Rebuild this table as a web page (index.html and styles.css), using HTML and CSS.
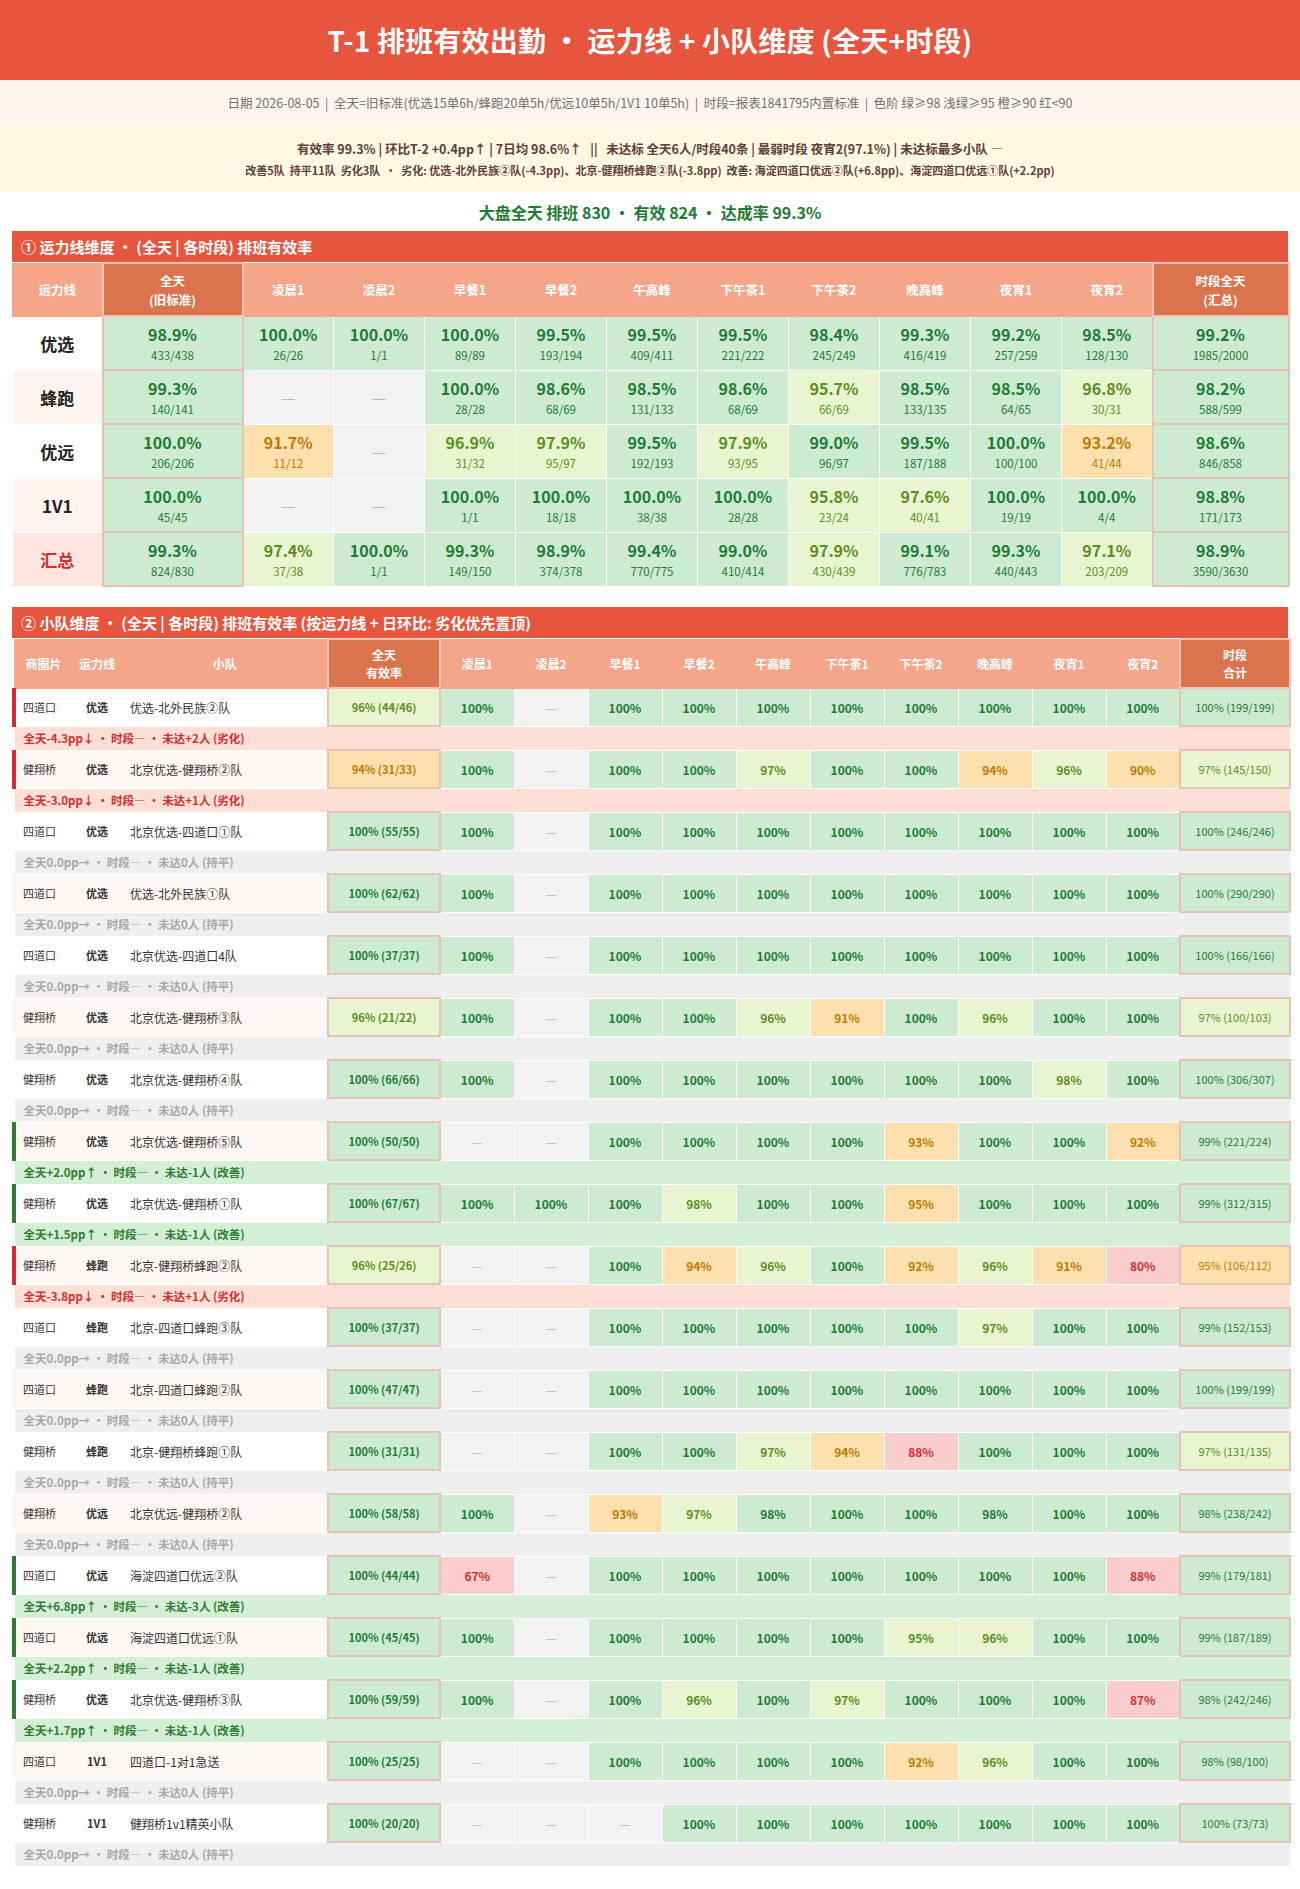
FILE: index.html
```html
<!DOCTYPE html>
<html lang="zh-CN">
<head>
<meta charset="utf-8">
<title>T-1 排班有效出勤</title>
<link rel="stylesheet" href="styles.css">
</head>
<body>
<header class="top"><h1>T-1 排班有效出勤 • 运力线 + 小队维度 (全天+时段)</h1></header>
<div class="meta">日期 2026-08-05  |  全天=旧标准(优选15单6h/蜂跑20单5h/优远10单5h/1V1 10单5h)  |  时段=报表1841795内置标准  |  色阶 绿≥98 浅绿≥95 橙≥90 红&lt;90</div>
<div class="brief">
  <p class="l1">有效率 99.3% | 环比T-2 +0.4pp↑ | 7日均 98.6%↑   ||   未达标 全天6人/时段40条 | 最弱时段 夜宵2(97.1%) | 未达标最多小队 —</p>
  <p class="l2">改善5队  持平11队  劣化3队  •  劣化: 优选-北外民族②队(-4.3pp)、北京-健翔桥蜂跑②队(-3.8pp)  改善: 海淀四道口优远②队(+6.8pp)、海淀四道口优远①队(+2.2pp)</p>
</div>
<div class="kpi">大盘全天 排班 830 • 有效 824 • 达成率 99.3%</div>

<section class="sec">
  <h2 class="sec-title">① 运力线维度 • (全天 | 各时段) 排班有效率</h2>
  <table class="t1">
    <colgroup><col class="c-lab"><col class="c-day"><col span="10" class="c-p"><col class="c-tot"></colgroup>
    <thead>
      <tr><th>运力线</th><th class="hk">全天<br>(旧标准)</th><th>凌晨1</th><th>凌晨2</th><th>早餐1</th><th>早餐2</th><th>午高峰</th><th>下午茶1</th><th>下午茶2</th><th>晚高峰</th><th>夜宵1</th><th>夜宵2</th><th class="hk">时段全天<br>(汇总)</th></tr>
    </thead>
    <tbody>
      <tr><td class="lab">优选</td><td class="k g"><b>98.9%</b><span>433/438</span></td><td class="g"><b>100.0%</b><span>26/26</span></td><td class="g"><b>100.0%</b><span>1/1</span></td><td class="g"><b>100.0%</b><span>89/89</span></td><td class="g"><b>99.5%</b><span>193/194</span></td><td class="g"><b>99.5%</b><span>409/411</span></td><td class="g"><b>99.5%</b><span>221/222</span></td><td class="g"><b>98.4%</b><span>245/249</span></td><td class="g"><b>99.3%</b><span>416/419</span></td><td class="g"><b>99.2%</b><span>257/259</span></td><td class="g"><b>98.5%</b><span>128/130</span></td><td class="k g"><b>99.2%</b><span>1985/2000</span></td></tr>
      <tr class="alt"><td class="lab">蜂跑</td><td class="k g"><b>99.3%</b><span>140/141</span></td><td class="na">—</td><td class="na">—</td><td class="g"><b>100.0%</b><span>28/28</span></td><td class="g"><b>98.6%</b><span>68/69</span></td><td class="g"><b>98.5%</b><span>131/133</span></td><td class="g"><b>98.6%</b><span>68/69</span></td><td class="lg"><b>95.7%</b><span>66/69</span></td><td class="g"><b>98.5%</b><span>133/135</span></td><td class="g"><b>98.5%</b><span>64/65</span></td><td class="lg"><b>96.8%</b><span>30/31</span></td><td class="k g"><b>98.2%</b><span>588/599</span></td></tr>
      <tr><td class="lab">优远</td><td class="k g"><b>100.0%</b><span>206/206</span></td><td class="o"><b>91.7%</b><span>11/12</span></td><td class="na">—</td><td class="lg"><b>96.9%</b><span>31/32</span></td><td class="lg"><b>97.9%</b><span>95/97</span></td><td class="g"><b>99.5%</b><span>192/193</span></td><td class="lg"><b>97.9%</b><span>93/95</span></td><td class="g"><b>99.0%</b><span>96/97</span></td><td class="g"><b>99.5%</b><span>187/188</span></td><td class="g"><b>100.0%</b><span>100/100</span></td><td class="o"><b>93.2%</b><span>41/44</span></td><td class="k g"><b>98.6%</b><span>846/858</span></td></tr>
      <tr class="alt"><td class="lab">1V1</td><td class="k g"><b>100.0%</b><span>45/45</span></td><td class="na">—</td><td class="na">—</td><td class="g"><b>100.0%</b><span>1/1</span></td><td class="g"><b>100.0%</b><span>18/18</span></td><td class="g"><b>100.0%</b><span>38/38</span></td><td class="g"><b>100.0%</b><span>28/28</span></td><td class="lg"><b>95.8%</b><span>23/24</span></td><td class="lg"><b>97.6%</b><span>40/41</span></td><td class="g"><b>100.0%</b><span>19/19</span></td><td class="g"><b>100.0%</b><span>4/4</span></td><td class="k g"><b>98.8%</b><span>171/173</span></td></tr>
      <tr class="sum"><td class="lab">汇总</td><td class="k g"><b>99.3%</b><span>824/830</span></td><td class="lg"><b>97.4%</b><span>37/38</span></td><td class="g"><b>100.0%</b><span>1/1</span></td><td class="g"><b>99.3%</b><span>149/150</span></td><td class="g"><b>98.9%</b><span>374/378</span></td><td class="g"><b>99.4%</b><span>770/775</span></td><td class="g"><b>99.0%</b><span>410/414</span></td><td class="lg"><b>97.9%</b><span>430/439</span></td><td class="g"><b>99.1%</b><span>776/783</span></td><td class="g"><b>99.3%</b><span>440/443</span></td><td class="lg"><b>97.1%</b><span>203/209</span></td><td class="k g"><b>98.9%</b><span>3590/3630</span></td></tr>
    </tbody>
  </table>
</section>

<section class="sec sec2">
  <h2 class="sec-title">② 小队维度 • (全天 | 各时段) 排班有效率 (按运力线 + 日环比: 劣化优先置顶)</h2>
  <table class="t2">
    <colgroup><col class="c-zone"><col class="c-line"><col class="c-team"><col class="c-day"><col span="10" class="c-p"><col class="c-tot"></colgroup>
    <thead>
      <tr><th class="h-zone">商圈片</th><th>运力线</th><th>小队</th><th class="hk">全天<br>有效率</th><th>凌晨1</th><th>凌晨2</th><th>早餐1</th><th>早餐2</th><th>午高峰</th><th>下午茶1</th><th>下午茶2</th><th>晚高峰</th><th>夜宵1</th><th>夜宵2</th><th class="hk">时段<br>合计</th></tr>
    </thead>
    <tbody>
      <tr class="main down"><td class="zone">四道口</td><td class="line">优选</td><td class="team">优选-北外民族②队</td><td class="day lg">96% (44/46)</td><td class="v g">100%</td><td class="v na">—</td><td class="v g">100%</td><td class="v g">100%</td><td class="v g">100%</td><td class="v g">100%</td><td class="v g">100%</td><td class="v g">100%</td><td class="v g">100%</td><td class="v g">100%</td><td class="tot g">100% (199/199)</td></tr>
      <tr class="sub s-down"><td colspan="15">全天-4.3pp↓ • 时段— • 未达+2人 (劣化)</td></tr>

      <tr class="main alt down"><td class="zone">健翔桥</td><td class="line">优选</td><td class="team">北京优选-健翔桥②队</td><td class="day o">94% (31/33)</td><td class="v g">100%</td><td class="v na">—</td><td class="v g">100%</td><td class="v g">100%</td><td class="v lg">97%</td><td class="v g">100%</td><td class="v g">100%</td><td class="v o">94%</td><td class="v lg">96%</td><td class="v o">90%</td><td class="tot lg">97% (145/150)</td></tr>
      <tr class="sub s-down"><td colspan="15">全天-3.0pp↓ • 时段— • 未达+1人 (劣化)</td></tr>

      <tr class="main"><td class="zone">四道口</td><td class="line">优选</td><td class="team">北京优选-四道口①队</td><td class="day g">100% (55/55)</td><td class="v g">100%</td><td class="v na">—</td><td class="v g">100%</td><td class="v g">100%</td><td class="v g">100%</td><td class="v g">100%</td><td class="v g">100%</td><td class="v g">100%</td><td class="v g">100%</td><td class="v g">100%</td><td class="tot g">100% (246/246)</td></tr>
      <tr class="sub s-flat"><td colspan="15">全天0.0pp→ • 时段— • 未达0人 (持平)</td></tr>

      <tr class="main alt"><td class="zone">四道口</td><td class="line">优选</td><td class="team">优选-北外民族①队</td><td class="day g">100% (62/62)</td><td class="v g">100%</td><td class="v na">—</td><td class="v g">100%</td><td class="v g">100%</td><td class="v g">100%</td><td class="v g">100%</td><td class="v g">100%</td><td class="v g">100%</td><td class="v g">100%</td><td class="v g">100%</td><td class="tot g">100% (290/290)</td></tr>
      <tr class="sub s-flat"><td colspan="15">全天0.0pp→ • 时段— • 未达0人 (持平)</td></tr>

      <tr class="main"><td class="zone">四道口</td><td class="line">优选</td><td class="team">北京优选-四道口4队</td><td class="day g">100% (37/37)</td><td class="v g">100%</td><td class="v na">—</td><td class="v g">100%</td><td class="v g">100%</td><td class="v g">100%</td><td class="v g">100%</td><td class="v g">100%</td><td class="v g">100%</td><td class="v g">100%</td><td class="v g">100%</td><td class="tot g">100% (166/166)</td></tr>
      <tr class="sub s-flat"><td colspan="15">全天0.0pp→ • 时段— • 未达0人 (持平)</td></tr>

      <tr class="main alt"><td class="zone">健翔桥</td><td class="line">优选</td><td class="team">北京优选-健翔桥③队</td><td class="day lg">96% (21/22)</td><td class="v g">100%</td><td class="v na">—</td><td class="v g">100%</td><td class="v g">100%</td><td class="v lg">96%</td><td class="v o">91%</td><td class="v g">100%</td><td class="v lg">96%</td><td class="v g">100%</td><td class="v g">100%</td><td class="tot lg">97% (100/103)</td></tr>
      <tr class="sub s-flat"><td colspan="15">全天0.0pp→ • 时段— • 未达0人 (持平)</td></tr>

      <tr class="main"><td class="zone">健翔桥</td><td class="line">优选</td><td class="team">北京优选-健翔桥④队</td><td class="day g">100% (66/66)</td><td class="v g">100%</td><td class="v na">—</td><td class="v g">100%</td><td class="v g">100%</td><td class="v g">100%</td><td class="v g">100%</td><td class="v g">100%</td><td class="v g">100%</td><td class="v lg">98%</td><td class="v g">100%</td><td class="tot g">100% (306/307)</td></tr>
      <tr class="sub s-flat"><td colspan="15">全天0.0pp→ • 时段— • 未达0人 (持平)</td></tr>

      <tr class="main alt up"><td class="zone">健翔桥</td><td class="line">优选</td><td class="team">北京优选-健翔桥⑤队</td><td class="day g">100% (50/50)</td><td class="v na">—</td><td class="v na">—</td><td class="v g">100%</td><td class="v g">100%</td><td class="v g">100%</td><td class="v g">100%</td><td class="v o">93%</td><td class="v g">100%</td><td class="v g">100%</td><td class="v o">92%</td><td class="tot g">99% (221/224)</td></tr>
      <tr class="sub s-up"><td colspan="15">全天+2.0pp↑ • 时段— • 未达-1人 (改善)</td></tr>

      <tr class="main up"><td class="zone">健翔桥</td><td class="line">优选</td><td class="team">北京优选-健翔桥①队</td><td class="day g">100% (67/67)</td><td class="v g">100%</td><td class="v g">100%</td><td class="v g">100%</td><td class="v lg">98%</td><td class="v g">100%</td><td class="v g">100%</td><td class="v o">95%</td><td class="v g">100%</td><td class="v g">100%</td><td class="v g">100%</td><td class="tot g">99% (312/315)</td></tr>
      <tr class="sub s-up"><td colspan="15">全天+1.5pp↑ • 时段— • 未达-1人 (改善)</td></tr>

      <tr class="main alt down"><td class="zone">健翔桥</td><td class="line">蜂跑</td><td class="team">北京-健翔桥蜂跑②队</td><td class="day lg">96% (25/26)</td><td class="v na">—</td><td class="v na">—</td><td class="v g">100%</td><td class="v o">94%</td><td class="v lg">96%</td><td class="v g">100%</td><td class="v o">92%</td><td class="v lg">96%</td><td class="v o">91%</td><td class="v r">80%</td><td class="tot o">95% (106/112)</td></tr>
      <tr class="sub s-down"><td colspan="15">全天-3.8pp↓ • 时段— • 未达+1人 (劣化)</td></tr>

      <tr class="main"><td class="zone">四道口</td><td class="line">蜂跑</td><td class="team">北京-四道口蜂跑③队</td><td class="day g">100% (37/37)</td><td class="v na">—</td><td class="v na">—</td><td class="v g">100%</td><td class="v g">100%</td><td class="v g">100%</td><td class="v g">100%</td><td class="v g">100%</td><td class="v lg">97%</td><td class="v g">100%</td><td class="v g">100%</td><td class="tot g">99% (152/153)</td></tr>
      <tr class="sub s-flat"><td colspan="15">全天0.0pp→ • 时段— • 未达0人 (持平)</td></tr>

      <tr class="main alt"><td class="zone">四道口</td><td class="line">蜂跑</td><td class="team">北京-四道口蜂跑②队</td><td class="day g">100% (47/47)</td><td class="v na">—</td><td class="v na">—</td><td class="v g">100%</td><td class="v g">100%</td><td class="v g">100%</td><td class="v g">100%</td><td class="v g">100%</td><td class="v g">100%</td><td class="v g">100%</td><td class="v g">100%</td><td class="tot g">100% (199/199)</td></tr>
      <tr class="sub s-flat"><td colspan="15">全天0.0pp→ • 时段— • 未达0人 (持平)</td></tr>

      <tr class="main"><td class="zone">健翔桥</td><td class="line">蜂跑</td><td class="team">北京-健翔桥蜂跑①队</td><td class="day g">100% (31/31)</td><td class="v na">—</td><td class="v na">—</td><td class="v g">100%</td><td class="v g">100%</td><td class="v lg">97%</td><td class="v o">94%</td><td class="v r">88%</td><td class="v g">100%</td><td class="v g">100%</td><td class="v g">100%</td><td class="tot lg">97% (131/135)</td></tr>
      <tr class="sub s-flat"><td colspan="15">全天0.0pp→ • 时段— • 未达0人 (持平)</td></tr>

      <tr class="main alt"><td class="zone">健翔桥</td><td class="line">优远</td><td class="team">北京优远-健翔桥②队</td><td class="day g">100% (58/58)</td><td class="v g">100%</td><td class="v na">—</td><td class="v o">93%</td><td class="v lg">97%</td><td class="v g">98%</td><td class="v g">100%</td><td class="v g">100%</td><td class="v g">98%</td><td class="v g">100%</td><td class="v g">100%</td><td class="tot g">98% (238/242)</td></tr>
      <tr class="sub s-flat"><td colspan="15">全天0.0pp→ • 时段— • 未达0人 (持平)</td></tr>

      <tr class="main up"><td class="zone">四道口</td><td class="line">优远</td><td class="team">海淀四道口优远②队</td><td class="day g">100% (44/44)</td><td class="v r">67%</td><td class="v na">—</td><td class="v g">100%</td><td class="v g">100%</td><td class="v g">100%</td><td class="v g">100%</td><td class="v g">100%</td><td class="v g">100%</td><td class="v g">100%</td><td class="v r">88%</td><td class="tot g">99% (179/181)</td></tr>
      <tr class="sub s-up"><td colspan="15">全天+6.8pp↑ • 时段— • 未达-3人 (改善)</td></tr>

      <tr class="main alt up"><td class="zone">四道口</td><td class="line">优远</td><td class="team">海淀四道口优远①队</td><td class="day g">100% (45/45)</td><td class="v g">100%</td><td class="v na">—</td><td class="v g">100%</td><td class="v g">100%</td><td class="v g">100%</td><td class="v g">100%</td><td class="v lg">95%</td><td class="v lg">96%</td><td class="v g">100%</td><td class="v g">100%</td><td class="tot g">99% (187/189)</td></tr>
      <tr class="sub s-up"><td colspan="15">全天+2.2pp↑ • 时段— • 未达-1人 (改善)</td></tr>

      <tr class="main up"><td class="zone">健翔桥</td><td class="line">优选</td><td class="team">北京优选-健翔桥③队</td><td class="day g">100% (59/59)</td><td class="v g">100%</td><td class="v na">—</td><td class="v g">100%</td><td class="v lg">96%</td><td class="v g">100%</td><td class="v lg">97%</td><td class="v g">100%</td><td class="v g">100%</td><td class="v g">100%</td><td class="v r">87%</td><td class="tot g">98% (242/246)</td></tr>
      <tr class="sub s-up"><td colspan="15">全天+1.7pp↑ • 时段— • 未达-1人 (改善)</td></tr>

      <tr class="main alt"><td class="zone">四道口</td><td class="line">1V1</td><td class="team">四道口-1对1急送</td><td class="day g">100% (25/25)</td><td class="v na">—</td><td class="v na">—</td><td class="v g">100%</td><td class="v g">100%</td><td class="v g">100%</td><td class="v g">100%</td><td class="v o">92%</td><td class="v lg">96%</td><td class="v g">100%</td><td class="v g">100%</td><td class="tot g">98% (98/100)</td></tr>
      <tr class="sub s-flat"><td colspan="15">全天0.0pp→ • 时段— • 未达0人 (持平)</td></tr>

      <tr class="main"><td class="zone">健翔桥</td><td class="line">1V1</td><td class="team">健翔桥1v1精英小队</td><td class="day g">100% (20/20)</td><td class="v na">—</td><td class="v na">—</td><td class="v na">—</td><td class="v g">100%</td><td class="v g">100%</td><td class="v g">100%</td><td class="v g">100%</td><td class="v g">100%</td><td class="v g">100%</td><td class="v g">100%</td><td class="tot g">100% (73/73)</td></tr>
      <tr class="sub s-flat"><td colspan="15">全天0.0pp→ • 时段— • 未达0人 (持平)</td></tr>
    </tbody>
  </table>
</section>
</body>
</html>
```

FILE: styles.css
```css
* { box-sizing: border-box; }

body {
  margin: 0;
  background: #fff;
  color: #333;
  font-family: "Noto Sans CJK SC", "Noto Sans", sans-serif;
}

/* ---------- page header ---------- */
.top {
  background: #e8553e;
  height: 80px;
  display: flex;
  align-items: center;
  justify-content: center;
}
.top h1 {
  margin: 0;
  color: #fff;
  font-size: 28px;
  font-weight: 700;
  letter-spacing: 0.2px;
}

.meta {
  background: #fdf4f0;
  height: 45px;
  display: flex;
  align-items: center;
  justify-content: center;
  font-size: 12.5px;
  color: #707070;
  white-space: pre;
}

.brief {
  background: #fff8e1;
  height: 67px;
  display: flex;
  flex-direction: column;
  align-items: center;
  justify-content: center;
  gap: 6px;
  color: #5d4037;
  font-weight: 700;
}
.brief p { margin: 0; white-space: pre; }
.brief .l1 { font-size: 12.5px; line-height: 17px; }
.brief .l2 { font-size: 11px; line-height: 15px; }

.kpi {
  height: 39px;
  display: flex;
  align-items: center;
  justify-content: center;
  font-size: 16px;
  font-weight: 700;
  color: #1e7b34;
}

/* ---------- sections ---------- */
.sec { margin: 0 12px; }
.sec2 { margin-top: 20px; }

.sec-title {
  margin: 0;
  height: 31px;
  line-height: 31px;
  padding-left: 9px;
  background: #e8553e;
  color: #fff;
  font-size: 15px;
  font-weight: 700;
}

table {
  width: 100%;
  border-collapse: collapse;
  table-layout: fixed;
}
th {
  background: #f4a58a;
  color: #fff;
  font-weight: 700;
  border: 1px solid #f4a58a;
  padding: 0;
}
th.hk {
  background: #db734e;
  border: 2px solid #f1c4b3;
}
td {
  padding: 0;
  text-align: center;
  border: 1px solid #fff;
}

/* colour scale */
.g  { background: #cdebd0; color: #1e7b34; }
.lg { background: #e8f5d0; color: #5a8f22; }
.o  { background: #fde0ae; color: #c17a00; }
.r  { background: #f9cdcc; color: #d32f2f; }
.na { background: #f2f2f2; color: #b8b8b8; font-weight: 400; }

/* ---------- table 1 ---------- */
.t1 .c-lab { width: 90px; }
.t1 .c-day { width: 140px; }
.t1 .c-p   { width: 91px; }
.t1 .c-tot { width: 136px; }

.t1 th {
  height: 53px;
  font-size: 12.5px;
  line-height: 19px;
}
.t1 td { height: 54px; }
.t1 td.k { border: 2px solid #e6c2b4; }
.t1 td b {
  display: block;
  font-size: 16px;
  line-height: 20px;
  font-weight: 700;
}
.t1 td span {
  display: block;
  margin-top: 3px;
  font-size: 11.5px;
  line-height: 16px;
  font-weight: 400;
}
.t1 .lab {
  font-size: 17px;
  font-weight: 700;
  color: #222;
  background: #fff;
}
.t1 tr.alt .lab { background: #fdf4f0; }
.t1 tr.sum .lab { background: #fce6df; color: #d32f2f; }

/* ---------- table 2 ---------- */
.t2 .c-zone { width: 58px; }
.t2 .c-line { width: 50px; }
.t2 .c-team { width: 206px; }
.t2 .c-day  { width: 112px; }
.t2 .c-p    { width: 74px; }
.t2 .c-tot  { width: 110px; }

.t2 th {
  height: 49px;
  font-size: 12px;
  line-height: 18px;
}
.t2 th.h-zone { text-align: left; padding-left: 11px; }

.t2 tr.main { background: #fff; --bar: #fff; }
.t2 tr.main.alt { background: #fdf7f3; --bar: #fdf7f3; }
.t2 tr.main.down { --bar: #d32f2f; }
.t2 tr.main.up { --bar: #2e7d32; }

.t2 tr.main td { height: 38px; }
.t2 td.zone,
.t2 td.line,
.t2 td.team {
  border-left: 0;
  border-right: 0;
  color: #333;
}
.t2 td.zone {
  border-left: 4px solid var(--bar);
  text-align: left;
  padding-left: 7px;
  font-size: 11px;
}
.t2 td.line {
  font-size: 11px;
  font-weight: 700;
}
.t2 td.team {
  text-align: left;
  padding-left: 8px;
  font-size: 12px;
}
.t2 td.day {
  border: 2px solid #e6c2b4;
  font-size: 11px;
  font-weight: 700;
}
.t2 td.tot {
  border: 2px solid #e6c2b4;
  font-size: 11px;
  font-weight: 400;
}
.t2 td.v {
  font-size: 12px;
  font-weight: 700;
}
.t2 td.v.na { font-weight: 400; }

.t2 tr.sub td {
  height: 24px;
  text-align: left;
  padding-left: 9px;
  font-size: 11.5px;
  font-weight: 700;
  white-space: pre;
}
.t2 tr.s-down td { background: #fddfd6; color: #d32f2f; }
.t2 tr.s-up td   { background: #d4efd6; color: #2e7d32; }
.t2 tr.s-flat td { background: #efefef; color: #a8a8a8; }
```
